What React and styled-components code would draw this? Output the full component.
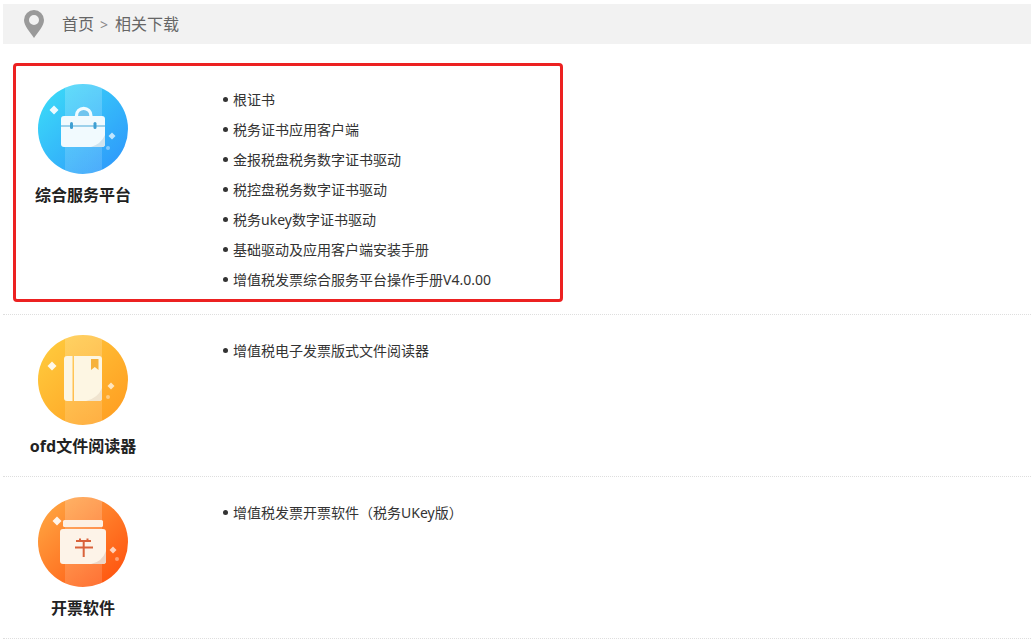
import React from "react";
import styled, { createGlobalStyle } from "styled-components";

const Global = createGlobalStyle`
  html, body { margin: 0; padding: 0; background: #fff; }
  body { font-family: "Noto Sans", "Noto Sans CJK SC", "Liberation Sans", sans-serif; color: #333; }
  * { box-sizing: border-box; }
`;

const Page = styled.div`
  padding: 4px 0 0 3px;
  width: 1031px;
  height: 641px;
  overflow: hidden;
`;

const Breadcrumb = styled.nav`
  display: flex;
  align-items: center;
  height: 40px;
  padding: 0 0 2px 21px;
  background: #f2f2f2;
  font-size: 16px;
  color: #666;
`;

const Pin = styled.svg`
  width: 20px;
  height: 28px;
  margin: 2px 18px 0 0;
  flex: none;
`;

const Sep = styled.span`
  margin: 2px 7px 0 6px;
  font-size: 14px;
  color: #888;
`;

const Sections = styled.div`
  margin-top: 20px;
`;

const Row = styled.section`
  position: relative;
  display: flex;
  gap: 60px;
  padding: 20px 0 19px;
  border-bottom: 1px dotted #dedede;
`;

const Highlight = styled.div`
  position: absolute;
  left: 10px;
  top: -1px;
  width: 550px;
  height: 239px;
  border: 3px solid #ec2121;
  border-radius: 4px;
  pointer-events: none;
`;

const Product = styled.div`
  width: 160px;
  flex: none;
  display: flex;
  flex-direction: column;
  align-items: center;
`;

const Badge = styled.svg`
  width: 90px;
  height: 90px;
  display: block;
`;

const Name = styled.h3`
  margin: 10px 0 0;
  font-size: 16px;
  line-height: 22px;
  font-weight: 700;
  color: #222;
  white-space: nowrap;
`;

const Files = styled.ul`
  list-style: none;
  margin: 0;
  padding: 0 0 1px;
`;

const File = styled.li`
  display: flex;
  align-items: center;
  height: 30px;
  font-size: 14px;
  color: #333;
  white-space: nowrap;
  &::before {
    content: "";
    width: 5px;
    height: 5px;
    margin-right: 5px;
    border-radius: 50%;
    background: #333;
  }
`;

function Sparkles({ a, b, c, color = "#fff" }) {
  return (
    <g fill={color}>
      <path d={`M${a[0]} ${a[1] - 4.5}L${a[0] + 4.5} ${a[1]}L${a[0]} ${a[1] + 4.5}L${a[0] - 4.5} ${a[1]}Z`} opacity=".9" />
      <path d={`M${b[0]} ${b[1] - 3.5}L${b[0] + 3.5} ${b[1]}L${b[0]} ${b[1] + 3.5}L${b[0] - 3.5} ${b[1]}Z`} opacity=".7" />
      <circle cx={c[0]} cy={c[1]} r="2" opacity=".4" />
    </g>
  );
}

function BadgeIcon({ id, from, to, children }) {
  return (
    <Badge viewBox="0 0 90 90">
      <defs>
        <linearGradient id={`bg-${id}`} x1="0.1" y1="0.1" x2="0.9" y2="0.9">
          <stop offset="0" stopColor={from} />
          <stop offset="1" stopColor={to} />
        </linearGradient>
        <linearGradient id={`band-${id}`} x1="0" y1="0" x2="0" y2="1">
          <stop offset="0" stopColor="#fff" stopOpacity=".2" />
          <stop offset="1" stopColor="#fff" stopOpacity=".14" />
        </linearGradient>
        <clipPath id={`clip-${id}`}>
          <circle cx="45" cy="45" r="45" />
        </clipPath>
      </defs>
      <circle cx="45" cy="45" r="45" fill={`url(#bg-${id})`} />
      <rect x="27" y="0" width="37" height="90" fill={`url(#band-${id})`} clipPath={`url(#clip-${id})`} />
      {children}
    </Badge>
  );
}

const Briefcase = () => (
  <BadgeIcon id="a" from="#3bd8f8" to="#2e9afb">
    <Sparkles a={[16, 26]} b={[74, 52]} c={[70, 64]} />
    <path d="M38.500 34v-2.500a7.200 7.200 0 0 1 14.400 0V34" fill="#6fc4ee" stroke="#f0fbff" strokeWidth="3.200" />
    <path d="M23 35a3 3 0 0 1 3-3h38a3 3 0 0 1 3 3v25a3 3 0 0 1-3 3H26a3 3 0 0 1-3-3Z" fill="#f1fafe" />
    <path d="M67 51v9a3 3 0 0 1-3 3h-11q10-3 14-12Z" fill="#cfe3ee" />
    <path d="M23 42h44" stroke="#4aa8d8" strokeWidth="1.200" />
    <rect x="32" y="38" width="3" height="7" rx="1.500" fill="#3f9fd2" />
    <rect x="55.500" y="38" width="3" height="7" rx="1.500" fill="#3f9fd2" />
  </BadgeIcon>
);

const Book = () => (
  <BadgeIcon id="b" from="#ffc93c" to="#ff9f22">
    <Sparkles a={[14, 31]} b={[73, 51]} c={[70, 62]} />
    <path d="M26 24a3 3 0 0 1 3-3h5.500v45H29a3 3 0 0 1-3-3Z" fill="#fdf6e3" />
    <path d="M36 21h25a3 3 0 0 1 3 3v39a3 3 0 0 1-3 3H36Z" fill="#fdf6e3" />
    <path d="M64 53v10a3 3 0 0 1-3 3H48q12-3 16-13Z" fill="#f0e4cf" />
    <path d="M53 24h7.500v11l-3.700-3-3.800 3Z" fill="#f6b23c" />
  </BadgeIcon>
);

const Wallet = () => (
  <BadgeIcon id="c" from="#ffa340" to="#ff5510">
    <Sparkles a={[19, 24]} b={[75, 53]} c={[79, 62]} />
    <rect x="25" y="23" width="40" height="7" rx="1.500" fill="#fdf0e2" />
    <path d="M22 35a3 3 0 0 1 3-3h40a3 3 0 0 1 3 3v29a3 3 0 0 1-3 3H25a3 3 0 0 1-3-3Z" fill="#fdf3e8" />
    <path d="M68 54v10a3 3 0 0 1-3 3H53q11-2 15-13Z" fill="#ecd6c8" />
    <path d="M38 44h15M37 50.500h18M45.700 44v16M42 41.500V44M49.500 41.500V44" stroke="#d9623a" strokeWidth="2" fill="none" />
  </BadgeIcon>
);

const sections = [
  {
    name: "综合服务平台",
    Icon: Briefcase,
    highlighted: true,
    files: [
      "根证书",
      "税务证书应用客户端",
      "金报税盘税务数字证书驱动",
      "税控盘税务数字证书驱动",
      "税务ukey数字证书驱动",
      "基础驱动及应用客户端安装手册",
      "增值税发票综合服务平台操作手册V4.0.00",
    ],
  },
  { name: "ofd文件阅读器", Icon: Book, files: ["增值税电子发票版式文件阅读器"] },
  { name: "开票软件", Icon: Wallet, files: ["增值税发票开票软件（税务UKey版）"] },
];

export default function App() {
  return (
    <Page>
      <Global />
      <Breadcrumb>
        <Pin viewBox="0 0 20 28">
          <path
            fillRule="evenodd"
            d="M10 0a10 10 0 0 1 10 10c0 6-6 12-10 18C6 22 0 16 0 10A10 10 0 0 1 10 0Zm0 5a5 5 0 1 0 0 10a5 5 0 0 0 0-10Z"
            fill="#9a9a9a"
          />
        </Pin>
        <span>首页</span>
        <Sep>&gt;</Sep>
        <span>相关下载</span>
      </Breadcrumb>
      <Sections>
        {sections.map(({ name, Icon, files, highlighted }) => (
          <Row key={name}>
            {highlighted && <Highlight />}
            <Product>
              <Icon />
              <Name>{name}</Name>
            </Product>
            <Files>
              {files.map((f) => (
                <File key={f}>{f}</File>
              ))}
            </Files>
          </Row>
        ))}
      </Sections>
    </Page>
  );
}
